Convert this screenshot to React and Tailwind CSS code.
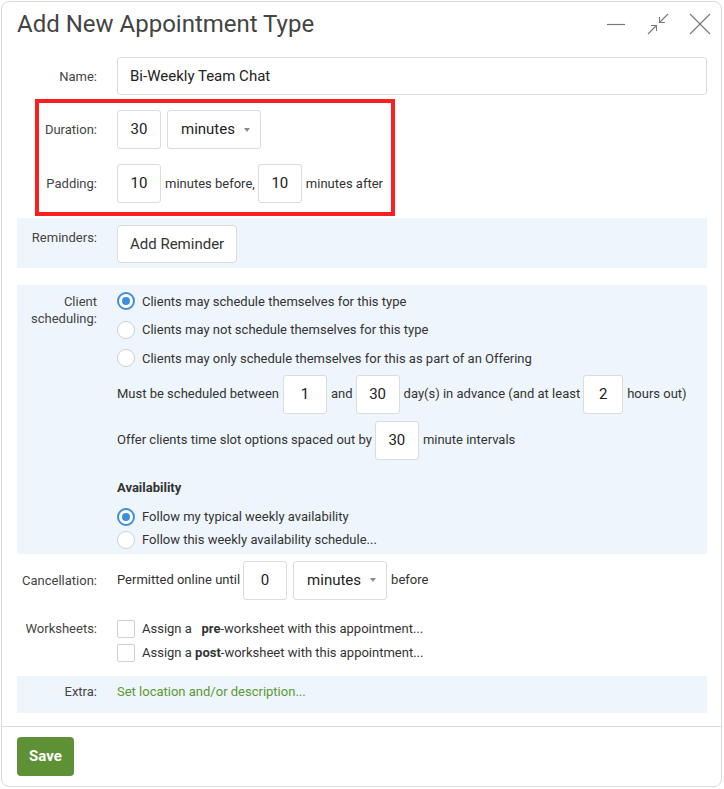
import React from 'react';

const FONT = { fontFamily: 'Roboto, "Liberation Sans", Arial, sans-serif' };

function NumBox({ value, w = 'w-[44px]' }) {
  return (
    <div className={`${w} h-[39px] flex items-center justify-center bg-white border border-[#dcdcdc] rounded-[3px] text-[15px] text-[#222] shrink-0`}>
      {value}
    </div>
  );
}

function SelectBox({ value }) {
  return (
    <div className="w-[94px] h-[39px] flex items-center justify-between pl-[13px] pr-[10px] bg-white border border-[#dcdcdc] rounded-[3px] text-[15px] text-[#222] shrink-0">
      <span>{value}</span>
      <span className="w-0 h-0 border-l-[3.5px] border-r-[3.5px] border-t-[4.5px] border-l-transparent border-r-transparent border-t-[#8a8a8a]" />
    </div>
  );
}

function Radio({ checked }) {
  if (checked) {
    return (
      <span className="w-[18px] h-[18px] rounded-full border-2 border-[#3d8fdc] bg-white flex items-center justify-center shrink-0">
        <span className="w-[8px] h-[8px] rounded-full bg-[#3d8fdc]" />
      </span>
    );
  }
  return <span className="w-[18px] h-[18px] rounded-full border border-[#d0d0d0] bg-white shrink-0" />;
}

function Checkbox() {
  return <span className="w-[18px] h-[18px] rounded-[2px] border border-[#d0d0d0] bg-white shrink-0" />;
}

function Label({ children, className = '' }) {
  return (
    <div className={`w-[80px] shrink-0 text-right text-[13px] leading-[17px] text-[#444] ${className}`}>{children}</div>
  );
}

export default function App() {
  return (
    <div className="w-[724px] h-[789px] bg-white pt-[1px] pl-[1px]" style={FONT}>
      <div className="relative w-[721px] h-[786px] border border-[#dadada] rounded-[8px] bg-white flex flex-col">
        {/* Header */}
        <div className="h-[55px] pl-[15px] pr-[10px] pt-[8px] flex items-start justify-between">
          <h1 className="text-[24px] leading-[28px] text-[#444]">Add New Appointment Type</h1>
          <div className="flex items-center gap-[20px] pt-[3px] text-[#777]">
            <svg width="20" height="22" viewBox="0 0 20 22" fill="none" stroke="currentColor" strokeWidth="1.2">
              <line x1="0" y1="11.5" x2="18" y2="11.5" />
            </svg>
            <svg width="22" height="22" viewBox="0 0 22 22" fill="none" stroke="currentColor" strokeWidth="1.1">
              <line x1="21" y1="1" x2="12.5" y2="9.5" />
              <polyline points="12.5,4 12.5,9.5 18,9.5" />
              <line x1="1" y1="21" x2="9.5" y2="12.5" />
              <polyline points="4,12.5 9.5,12.5 9.5,18" />
            </svg>
            <svg width="22" height="22" viewBox="0 0 22 22" fill="none" stroke="currentColor" strokeWidth="1.1">
              <line x1="1" y1="1" x2="21" y2="21" />
              <line x1="21" y1="1" x2="1" y2="21" />
            </svg>
          </div>
        </div>

        <div className="pl-[15px] pr-[14px] flex flex-col">
          {/* Name */}
          <div className="flex items-center gap-[20px]">
            <Label>Name:</Label>
            <div className="flex-1 h-[38px] flex items-center pl-[12px] bg-white border border-[#dcdcdc] rounded-[3px] text-[15px] text-[#222]">
              Bi-Weekly Team Chat
            </div>
          </div>

          {/* Duration */}
          <div className="mt-[15px] flex items-center gap-[20px]">
            <Label>Duration:</Label>
            <div className="flex items-center gap-[6px]">
              <NumBox value="30" />
              <SelectBox value="minutes" />
            </div>
          </div>

          {/* Padding */}
          <div className="mt-[15px] flex items-center gap-[20px]">
            <Label>Padding:</Label>
            <div className="flex items-center text-[13px] text-[#333]">
              <NumBox value="10" />
              <span className="ml-[4px] mr-[3px]">minutes before,</span>
              <NumBox value="10" />
              <span className="ml-[4px]">minutes after</span>
            </div>
          </div>

          {/* Reminders */}
          <div className="mt-[15px] bg-[#eef5fc] pt-[7px] pb-[5px] flex items-start gap-[20px]">
            <Label className="mt-[4px]">Reminders:</Label>
            <div className="h-[38px] px-[12px] flex items-center bg-white border border-[#dcdcdc] rounded-[4px] text-[15px] text-[#333]">
              Add Reminder
            </div>
          </div>

          {/* Client scheduling */}
          <div className="mt-[17px] bg-[#eef5fc] pt-[2px] pb-[2px] flex items-start gap-[20px]">
            <Label className="mt-[5.5px]">Client<br />scheduling:</Label>
            <div className="flex flex-col text-[13px] text-[#333]">
              <div className="h-[28.5px] flex items-center gap-[7px]">
                <Radio checked />
                <span>Clients may schedule themselves for this type</span>
              </div>
              <div className="h-[28.5px] flex items-center gap-[7px]">
                <Radio />
                <span>Clients may not schedule themselves for this type</span>
              </div>
              <div className="h-[28.5px] flex items-center gap-[7px]">
                <Radio />
                <span>Clients may only schedule themselves for this as part of an Offering</span>
              </div>
              <div className="mt-[2px] flex items-center">
                <span className="mr-[4px]">Must be scheduled between</span>
                <NumBox value="1" />
                <span className="ml-[4px] mr-[3px]">and</span>
                <NumBox value="30" />
                <span className="ml-[4px] mr-[3px]">day(s) in advance (and at least</span>
                <NumBox value="2" w="w-[40px]" />
                <span className="ml-[4px]">hours out)</span>
              </div>
              <div className="mt-[7px] flex items-center">
                <span className="mr-[3px]">Offer clients time slot options spaced out by</span>
                <NumBox value="30" />
                <span className="ml-[4px]">minute intervals</span>
              </div>
              <div className="mt-[19px] leading-[18px] font-bold">Availability</div>
              <div className="mt-[9px] h-[23px] flex items-center gap-[7px]">
                <Radio checked />
                <span>Follow my typical weekly availability</span>
              </div>
              <div className="h-[23px] flex items-center gap-[7px]">
                <Radio />
                <span>Follow this weekly availability schedule...</span>
              </div>
            </div>
          </div>

          {/* Cancellation */}
          <div className="mt-[7px] flex items-center gap-[20px]">
            <Label>Cancellation:</Label>
            <div className="flex items-center text-[13px] text-[#333]">
              <span className="mr-[3px]">Permitted online until</span>
              <NumBox value="0" />
              <span className="w-[6px]" />
              <SelectBox value="minutes" />
              <span className="ml-[4px]">before</span>
            </div>
          </div>

          {/* Worksheets */}
          <div className="mt-[17px] flex items-start gap-[20px]">
            <Label className="mt-[3.5px]">Worksheets:</Label>
            <div className="flex flex-col text-[13px] text-[#333]">
              <div className="h-[24px] flex items-center gap-[7px]">
                <Checkbox />
                <span>Assign a&nbsp;&nbsp; <b>pre</b>-worksheet with this appointment...</span>
              </div>
              <div className="h-[24px] flex items-center gap-[7px]">
                <Checkbox />
                <span>Assign a <b>post</b>-worksheet with this appointment...</span>
              </div>
            </div>
          </div>

          {/* Extra */}
          <div className="mt-[11px] h-[37px] pb-[5px] bg-[#eef5fc] flex items-center gap-[20px]">
            <Label>Extra:</Label>
            <span className="text-[13px] text-[#5b9a2f]">Set location and/or description...</span>
          </div>
        </div>

        {/* Footer */}
        <div className="mt-[13px] border-t border-[#dadada] pt-[10px] pl-[15px]">
          <button className="h-[39px] px-[12px] rounded-[4px] bg-[#5e9136] text-white text-[15px] font-bold">
            Save
          </button>
        </div>

        {/* Annotation box */}
        <div className="absolute left-[33px] top-[97px] w-[360px] h-[117px] border-[4px] border-[#fb2020] pointer-events-none" />
      </div>
    </div>
  );
}
